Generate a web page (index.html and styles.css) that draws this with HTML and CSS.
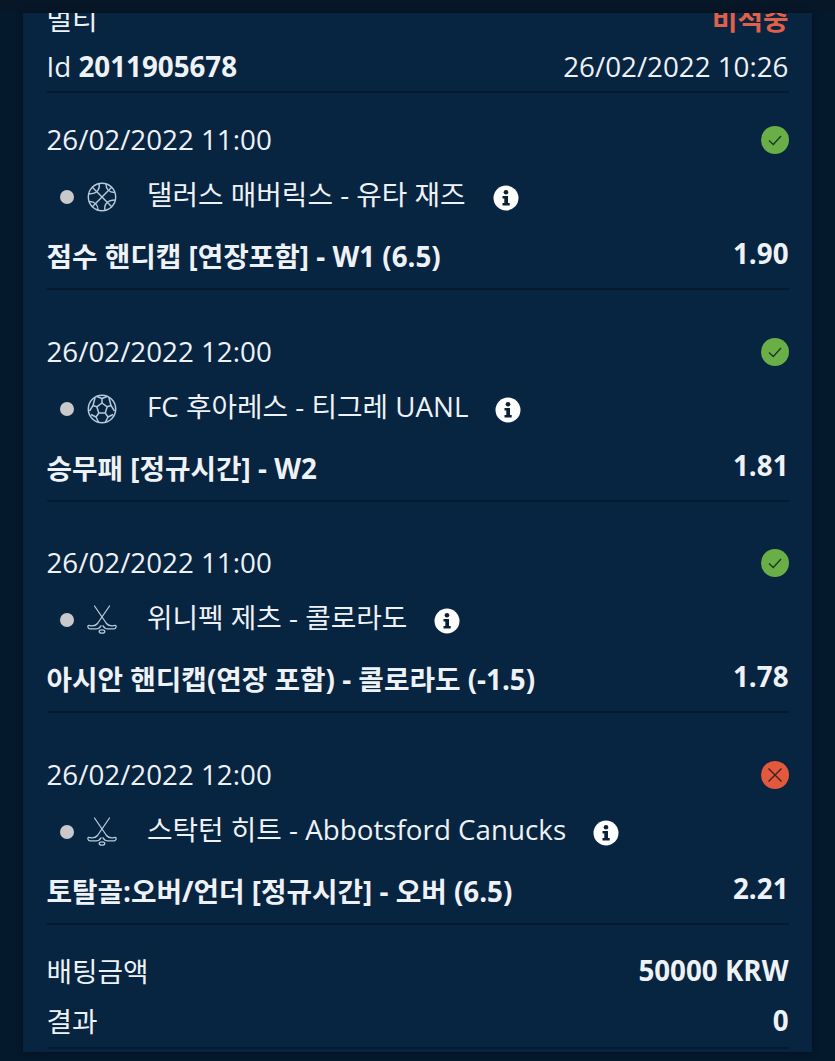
FILE: index.html
```html
<!DOCTYPE html>
<html lang="ko">
<head>
<meta charset="utf-8">
<title>멀티</title>
<link rel="stylesheet" href="styles.css">
</head>
<body>
<svg class="defs" width="0" height="0" aria-hidden="true">
  <symbol id="basket" viewBox="0 0 30 30">
    <g fill="none" stroke="#b7c9da" stroke-width="1.4" stroke-linecap="round">
      <circle cx="15" cy="15" r="13.7"/>
      <path d="M5.300 5.300 24.700 24.700"/>
      <path d="M24.700 5.300 5.300 24.700"/>
      <path d="M12 1.600C13 6 11.500 12 1.600 12"/>
      <path d="M18 28.400C17 24 18.500 18 28.400 18"/>
      <path d="M19 2C19 7 22 10.500 27.500 10.500"/>
      <path d="M11 28C11 23 8 19.500 2.500 19.500"/>
    </g>
  </symbol>
  <symbol id="soccer" viewBox="0 0 30 30">
    <g fill="none" stroke="#b7c9da" stroke-width="1.500" stroke-linejoin="round">
      <circle cx="15" cy="15" r="13.700"/>
      <path d="M15 9 20.200 12.800 18.200 19H11.800L9.800 12.800Z"/>
      <path d="M15 9V4.500M20.200 12.800 24 11.500M18.200 19 21 23M11.800 19 9 23M9.800 12.800 6 11.500"/>
      <path d="M10 2.500 15 4.500 20 2.500M22 4 24 11.500 27.500 17M26 20.500 21 23 18.500 28M11.500 28 9 23 4 20.500M2.500 17 6 11.500 8 4"/>
    </g>
  </symbol>
  <symbol id="hockey" viewBox="0 0 30 30">
    <g fill="none" stroke="#b7c9da" stroke-width="1.300" stroke-linecap="round" stroke-linejoin="round">
      <path d="M7.500 1 19.500 18.500"/>
      <path d="M22.500 1 10.500 18.500"/>
      <path d="M19.500 18.500C21 20.500 22.500 20.800 25 20.800 26.500 20.800 28 20 28.800 20.500 29.500 21.500 29 23.500 27 23.800H21C18.800 23.800 17 22.500 16 20.800"/>
      <path d="M10.500 18.500C9 20.500 7.500 20.800 5 20.800 3.500 20.800 2 20 1.200 20.500 .5 21.500 1 23.500 3 23.800H9C11.200 23.800 13 22.500 14 20.800"/>
      <ellipse cx="15" cy="26.500" rx="2.800" ry="1.700"/>
    </g>
  </symbol>
  <symbol id="info" viewBox="0 0 26 26">
    <circle cx="13" cy="13" r="12.500" fill="#fff"/>
    <circle cx="13" cy="7.300" r="2.300" fill="#0a2036"/>
    <path d="M9.500 11h5.500v7h1.700v2.500H9.500V18h1.800v-4.500H9.500z" fill="#0a2036"/>
  </symbol>
  <symbol id="won" viewBox="0 0 28 28">
    <circle cx="14" cy="14" r="14" fill="#6aae48"/>
    <path d="M8 14.500 12.300 18.500 20 10" fill="none" stroke="#17391f" stroke-width="1.300"/>
  </symbol>
  <symbol id="lost" viewBox="0 0 28 28">
    <circle cx="14" cy="14" r="14" fill="#e3593b"/>
    <path d="M7.500 7.500 20.500 20.500M20.500 7.500 7.500 20.500" fill="none" stroke="#3a1f2b" stroke-width="1.400"/>
  </symbol>
</svg>

<div class="top-strip"></div>
<main class="card">
  <div class="scroll">
    <header class="bet-head">
      <div class="row head-type">
        <span>멀티</span>
        <span class="status-lost">비적중</span>
      </div>
      <div class="row head-id">
        <span>Id <strong>2011905678</strong></span>
        <span>26/02/2022 10:26</span>
      </div>
    </header>

    <section class="item">
      <div class="row date"><span>26/02/2022 11:00</span><svg class="status"><use href="#won"/></svg></div>
      <div class="match">
        <span class="dot"></span>
        <svg class="sport"><use href="#basket"/></svg>
        <span class="teams">댈러스 매버릭스 - 유타 재즈</span>
        <svg class="info"><use href="#info"/></svg>
      </div>
      <div class="row market"><span>점수 핸디캡 [연장포함] - W1 (6.5)</span><span class="odds">1.90</span></div>
    </section>

    <section class="item">
      <div class="row date"><span>26/02/2022 12:00</span><svg class="status"><use href="#won"/></svg></div>
      <div class="match">
        <span class="dot"></span>
        <svg class="sport"><use href="#soccer"/></svg>
        <span class="teams">FC 후아레스 - 티그레 UANL</span>
        <svg class="info"><use href="#info"/></svg>
      </div>
      <div class="row market"><span>승무패 [정규시간] - W2</span><span class="odds">1.81</span></div>
    </section>

    <section class="item">
      <div class="row date"><span>26/02/2022 11:00</span><svg class="status"><use href="#won"/></svg></div>
      <div class="match">
        <span class="dot"></span>
        <svg class="sport"><use href="#hockey"/></svg>
        <span class="teams">위니펙 제츠 - 콜로라도</span>
        <svg class="info"><use href="#info"/></svg>
      </div>
      <div class="row market"><span>아시안 핸디캡(연장 포함) - 콜로라도 (-1.5)</span><span class="odds">1.78</span></div>
    </section>

    <section class="item item-last">
      <div class="row date"><span>26/02/2022 12:00</span><svg class="status"><use href="#lost"/></svg></div>
      <div class="match">
        <span class="dot"></span>
        <svg class="sport"><use href="#hockey"/></svg>
        <span class="teams">스탁턴 히트 - Abbotsford Canucks</span>
        <svg class="info"><use href="#info"/></svg>
      </div>
      <div class="row market"><span>토탈골:오버/언더 [정규시간] - 오버 (6.5)</span><span class="odds">2.21</span></div>
    </section>

    <footer class="summary">
      <div class="row sum-row"><span>배팅금액</span><strong>50000 KRW</strong></div>
      <div class="row sum-row"><span>결과</span><strong>0</strong></div>
    </footer>
  </div>
</main>
</body>
</html>
```

FILE: styles.css
```css
* { box-sizing: border-box; }
html, body { margin: 0; padding: 0; }
body {
  width: 835px;
  height: 1061px;
  overflow: hidden;
  background: #05192d;
  color: #eef2f6;
  font-family: "Open Sans", "Noto Sans CJK KR", sans-serif;
  font-size: 27.75px;
  letter-spacing: 0;
}
.defs { display: block; height: 0; }
.top-strip { height: 13px; background: #071728; }
.card {
  width: 789px;
  height: 1039px;
  margin-left: 23px;
  background: #072440;
  overflow: hidden;
  box-shadow: 0 0 6px rgba(0, 0, 0, .45);
}
.scroll { padding: 0 23.500px; margin-top: -13px; }
.row { display: flex; justify-content: space-between; align-items: center; }
.bet-head { border-bottom: 2px solid #051a30; }
.head-type { height: 36px; }
.status-lost { color: #e0604a; font-weight: 700; }
.head-id { height: 55px; padding-top: 4px; }
.head-id strong { font-weight: 700; }
.item {
  height: 197px;
  margin-bottom: 14.500px;
  padding-top: 26px;
  border-bottom: 2px solid #051a30;
}
.item-last { margin-bottom: 0; }
.date { height: 40px; }
.status { width: 28px; height: 28px; flex: none; margin-top: 2px; }
.match { display: flex; align-items: center; height: 76px; padding-left: 13.500px; }
.dot { width: 14px; height: 14px; border-radius: 50%; background: #c9c9cc; flex: none; }
.sport { width: 30px; height: 30px; margin: 0 30px 0 13px; flex: none; }
.teams { line-height: 40px; margin-top: -6px; }
.info { width: 26px; height: 26px; margin: 2px 0 0 27px; flex: none; }
.market { height: 40px; font-weight: 700; }
.market .odds { margin-top: -4px; }
.summary { padding: 20.500px 0 2px; border-bottom: 2px solid #051a30; }
.sum-row { height: 50px; }
.sum-row strong { font-weight: 700; }
```
